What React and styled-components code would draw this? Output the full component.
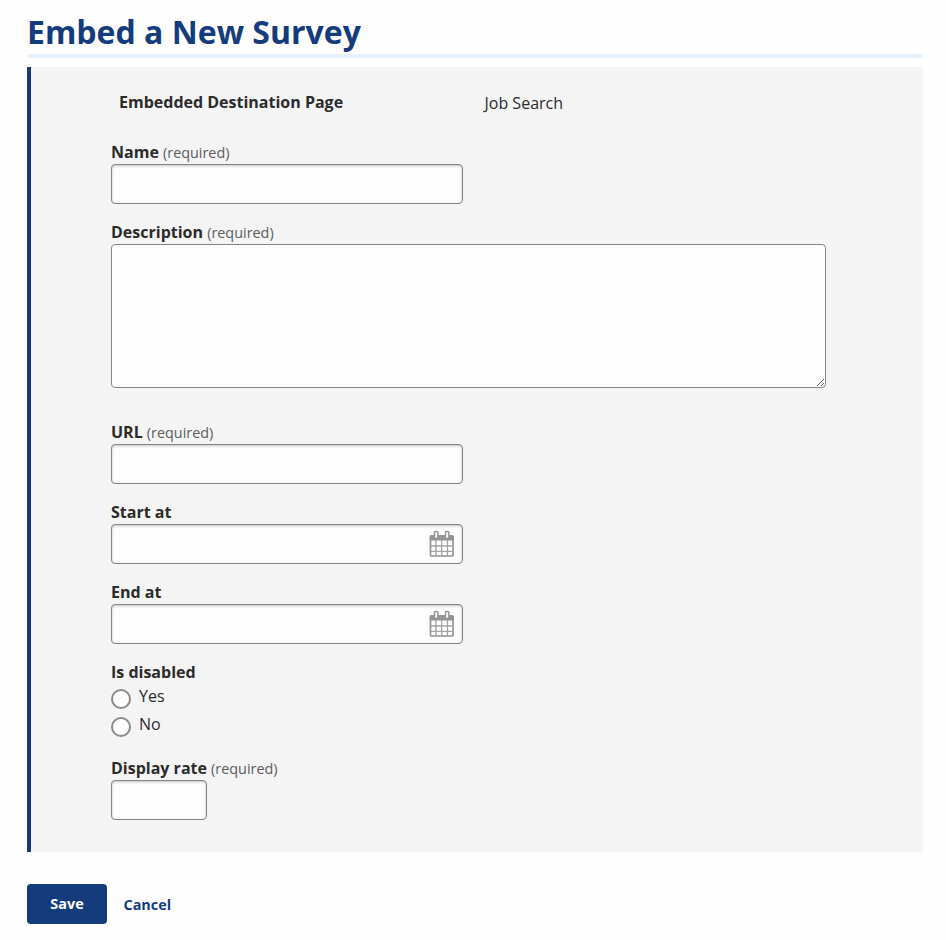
import React from 'react'
import styled, { createGlobalStyle } from 'styled-components'


const CalendarIcon = () => {
  return (
    <Calendar viewBox="0 0 26 28" aria-hidden="true">
      <rect x="1.5" y="6" width="22.5" height="20" rx="1" fill="#fff" stroke="#949496" strokeWidth="1.7" />
      <rect x="0.7" y="5.2" width="24.1" height="5.4" rx="1" fill="#949496" />
      <path d="M6.9 10v16M12.7 10v16M18.5 10v16M2 16h22M2 21.3h22" fill="none" stroke="#a2a2a4" strokeWidth="1.3" />
      <rect x="5.5" y="1.5" width="3.4" height="7" rx="1.2" fill="#fff" stroke="#949496" strokeWidth="1.5" />
      <rect x="16.5" y="1.5" width="3.4" height="7" rx="1.2" fill="#fff" stroke="#949496" strokeWidth="1.5" />
    </Calendar>
  )
}

const Field = ({ id, label, required, last, children }) => {
  return (
    <FieldWrapper $last={last}>
      <Label htmlFor={id}>
        {label} {required && <Required>(required)</Required>}
      </Label>
      {children}
    </FieldWrapper>
  )
}

const App = () => {
  return (
    <>
      <GlobalStyle />
      <Page>
        <Title>Embed a New Survey</Title>
        <form onSubmit={(e) => e.preventDefault()}>
          <Panel>
            <Destination>
              <dt>Embedded Destination Page</dt>
              <dd>Job Search</dd>
            </Destination>
            <Field id="name" label="Name" required>
              <Input id="name" type="text" />
            </Field>
            <Field id="description" label="Description" required>
              <TextArea id="description" />
            </Field>
            <Field id="url" label="URL" required>
              <Input id="url" type="text" />
            </Field>
            <Field id="start" label="Start at">
              <DateBox>
                <Input id="start" type="text" />
                <CalendarIcon />
              </DateBox>
            </Field>
            <Field id="end" label="End at">
              <DateBox>
                <Input id="end" type="text" />
                <CalendarIcon />
              </DateBox>
            </Field>
            <Field label="Is disabled">
              <RadioRow>
                <input type="radio" name="disabled" />
                <span>Yes</span>
              </RadioRow>
              <RadioRow>
                <input type="radio" name="disabled" />
                <span>No</span>
              </RadioRow>
            </Field>
            <Field id="rate" label="Display rate" required last>
              <Input id="rate" type="text" $width="96px" />
            </Field>
          </Panel>
          <Actions>
            <SaveButton type="submit">Save</SaveButton>
            <CancelLink href="#">Cancel</CancelLink>
          </Actions>
        </form>
      </Page>
    </>
  )
}

const GlobalStyle = createGlobalStyle`
  * {
    box-sizing: border-box;
  }

  body {
    margin: 0;
    background-color: #fefefe;
    color: #2b2b2b;
    font-family: "Open Sans", "Noto Sans", sans-serif;
    font-size: 16px;
    line-height: 24px;
  }
`;

const Page = styled.main`
  padding: 10px 23px 16px 27px;
`;

const Title = styled.h1`
  margin: 0 1px 9px;
  border-bottom: 4px solid #e7f1fd;
  color: #143c7c;
  font-size: 32px;
  font-weight: 700;
  line-height: 44px;
  text-indent: -1px;
`;

const Panel = styled.div`
  padding: 23px 80px 32px;
  border-left: 4px solid #143c7c;
  background-color: #f4f4f4;
`;

const Destination = styled.dl`
  display: grid;
  grid-template-columns: 365.5px 1fr;
  margin: 0 0 26px;
  padding-left: 8px;

  dt {
    font-weight: 700;
  }

  dd {
    margin: 1px 0 -1px;
  }
`;

const FieldWrapper = styled.div`
  margin-bottom: ${({ $last }) => ($last ? '0' : '16px')};
`;

const Label = styled.label`
  display: block;
  font-weight: 700;
`;

const Required = styled.span`
  color: #5c5c5c;
  font-size: 14.4px;
  font-weight: 400;
  line-height: 1;
`;

const Input = styled.input`
  display: block;
  width: ${({ $width }) => $width || '352px'};
  height: 40px;
  padding: 8px;
  border: 1px solid #858585;
  border-radius: 4px;
  background-color: #fefefe;
  box-shadow: inset 0 1px 3px rgba(0, 0, 0, 0.25);
  font: inherit;
`;

const TextArea = styled.textarea`
  display: block;
  width: 715px;
  height: 144px;
  margin-bottom: 32px;
  padding: 8px;
  border: 1px solid #858585;
  border-radius: 4px;
  background-color: #fefefe;
  font: inherit;
`;

const DateBox = styled.div`
  position: relative;
  width: 352px;
`;

const Calendar = styled.svg`
  position: absolute;
  top: 6px;
  right: 8px;
  width: 26px;
  height: 28px;
  pointer-events: none;
`;

const RadioRow = styled.label`
  display: flex;
  gap: 8px;
  height: 28px;

  input {
    appearance: none;
    width: 20px;
    height: 20px;
    margin: 5px 0 0;
    border: 2px solid #8a8a8a;
    border-radius: 50%;
    background-color: #fefefe;
  }

  input:checked {
    box-shadow: inset 0 0 0 4px #fefefe;
    background-color: #143c7c;
  }
`;

const Actions = styled.div`
  display: flex;
  align-items: center;
  gap: 16.5px;
  margin-top: 32px;
`;

const SaveButton = styled.button`
  width: 80px;
  height: 40px;
  padding: 0;
  border: 0;
  border-radius: 4px;
  background-color: #143c7c;
  color: #fff;
  font: inherit;
  font-size: 14.4px;
  font-weight: 700;
`;

const CancelLink = styled.a`
  padding-top: 2px;
  color: #143c7c;
  font-size: 14.4px;
  font-weight: 700;
  text-decoration: none;
`;

export default App
